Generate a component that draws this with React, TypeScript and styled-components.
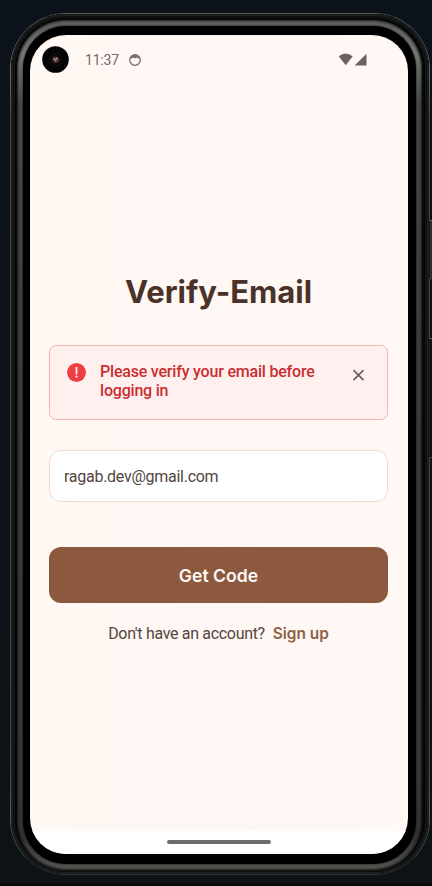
import React from "react";
import styled, { createGlobalStyle } from "styled-components";

const GlobalStyle = createGlobalStyle`
  * { box-sizing: border-box; }
  body { margin: 0; background: #0d131a; }
`;

const Stage = styled.main`
  width: 432px;
  height: 886px;
  overflow: hidden;
  padding: 13px 0 0 10px;
  background: linear-gradient(#0d131b, #0c1218 50%, #0d1215 99.5%, #07090b);
  position: relative;
  font-family: Roboto, sans-serif;
`;

const Bezel = styled.div`
  width: 420px;
  height: 862px;
  border-radius: 56px;
  padding: 1px;
  background: linear-gradient(#565b59, #6c6c6c 6%, #484a4a 12%, #404141 85%, #606060 95%, #333);
`;

const Shell = styled.div`
  height: 100%;
  border-radius: 55px;
  padding: 6px 7px 4px 6px;
  background: #080a0a;
  box-shadow: inset 0 0 0 1px #151919, inset 0 0 0 2px #1c201f, inset 0 0 0 3px #0b0d0d,
    inset 0 0 0 4px #161818, inset 0 0 0 5px #020202;
`;

const Rim = styled.div`
  height: 100%;
  border-radius: 49px;
  padding: 6px;
  background: linear-gradient(#595c59, #777976 4%, #464746 10%, #3b3b3a 50%, #383838 90%, #32312f 96%, #585652);
  box-shadow: inset 0 0 2px 1px rgba(0, 0, 0, 0.65);
`;

const Glass = styled.div`
  height: 100%;
  border-radius: 43px;
  padding: 9px 9px 10px 7px;
  background: #000;
  box-shadow: 0 0 2px 0 #000;
`;

const Screen = styled.div`
  width: 378px;
  height: 819px;
  border-radius: 36px;
  overflow: hidden;
  display: flex;
  flex-direction: column;
  background: linear-gradient(90deg, #fff8f3, #fff7f3 50%, #fff8f4);
`;

const SideButton = styled.i<{ $top: number; $height: number; $shade: string }>`
  position: absolute;
  right: 0;
  top: ${(p) => p.$top}px;
  width: 3px;
  height: ${(p) => p.$height}px;
  background: ${(p) => p.$shade};
  border-left: 1px solid #1c1c1c;
  border-top: 1px solid #666;
  border-bottom: 1px solid #444;
`;

const StatusBar = styled.header`
  height: 50px;
  padding: 0 41px 1px 12px;
  display: flex;
  align-items: center;
  color: #756b69;
`;

const Camera = styled.svg`
  width: 27px;
  height: 27px;
  margin-right: 16px;
`;

const Clock = styled.span`
  font-size: 14px;
  letter-spacing: -0.2px;
  width: 44px;
`;

const FaceIcon = styled.svg`
  width: 12px;
  height: 12px;
`;

const Signals = styled.svg`
  width: 29px;
  height: 14px;
  margin-left: auto;
`;

const Content = styled.section`
  flex: 1;
  padding: 188px 20px 0 19px;
  display: flex;
  flex-direction: column;
`;

const Title = styled.h1`
  margin: 0;
  height: 38px;
  text-align: center;
  font: 700 31px/38px Inter, sans-serif;
  color: #4a3228;
`;

const Alert = styled.div`
  height: 75px;
  margin-top: 34px;
  padding: 17px 22px 0 17px;
  display: flex;
  align-items: flex-start;
  border: 1px solid #f5b4b1;
  border-radius: 7px;
  background: #fff0f0;
`;

const AlertIcon = styled.svg`
  flex: none;
  width: 19px;
  height: 19px;
  margin: 0 14px 0 0;
`;

const AlertText = styled.p`
  margin: 0;
  flex: 1;
  font-size: 16px;
  letter-spacing: -0.2px;
  line-height: 18.5px;
  font-weight: 500;
  color: #ca2e30;
  white-space: nowrap;
`;

const CloseButton = styled.button`
  padding: 6px 0 0;
  border: 0;
  background: none;
  display: flex;
`;

const EmailField = styled.input`
  width: 100%;
  height: 52px;
  margin-top: 30px;
  padding: 1px 14px 0;
  border: 1px solid #f2d9cc;
  border-radius: 12px;
  outline: 0;
  background: #fff;
  font: 400 16px Roboto, sans-serif;
  letter-spacing: -0.27px;
  color: #54453f;
`;

const SubmitButton = styled.button`
  height: 56px;
  margin-top: 45px;
  padding: 0;
  border: 0;
  border-radius: 12px;
  background: #8c593f;
  color: #fffaf6;
  font: 600 17.6px Inter, sans-serif;
`;

const SignupRow = styled.p`
  margin: 21px 0 0;
  display: flex;
  justify-content: center;
  gap: 8px;
  font-size: 16px;
  letter-spacing: -0.32px;
  line-height: 20px;
  color: #54453f;
`;

const SignupLink = styled.a`
  font-family: Inter, sans-serif;
  font-size: 15.4px;
  letter-spacing: 0;
  font-weight: 600;
  color: #8f6048;
`;

const NavBar = styled.footer`
  height: 23px;
  display: flex;
  justify-content: center;
  padding-top: 9px;
  background: #fff;
`;

const HomeHandle = styled.div`
  width: 104px;
  height: 4px;
  border-radius: 2px;
  background: #6f6a6b;
`;

export default function App() {
  return (
    <>
      <GlobalStyle />
      <Stage>
        <Bezel>
          <Shell>
            <Rim>
              <Glass>
                <Screen>
                  <StatusBar>
                    <Camera viewBox="0 0 27 27">
                      <circle cx="13.5" cy="13.5" r="13.3" fill="#050404" />
                      <circle cx="13.5" cy="13.5" r="8" fill="#0e0908" />
                      <circle cx="13.7" cy="13.7" r="3.2" fill="#493a35" />
                      <path d="M11.6 12.3l2.3 2.4M14.2 12.2l1.2 1" stroke="#c9b1a9" strokeWidth="1.2" />
                    </Camera>
                    <Clock>11:37</Clock>
                    <FaceIcon viewBox="0 0 12 12">
                      <circle cx="6" cy="6" r="5.3" fill="none" stroke="currentColor" strokeWidth="1.2" />
                      <path d="M1.6 4.9L3 4.3L4 3.6Q6 4.8 8 3.6L9 4.3L10.4 4.9C10 1.8 8.2.8 6 .8S2 1.8 1.6 4.9Z" fill="currentColor" />
                    </FaceIcon>
                    <Signals viewBox="0 0 29 14" fill="#6b6261">
                      <path d="M.7 3.2Q7.7-2.2 14.7 3.2L7.7 12.2Z" />
                      <path d="M28.5.8V12.4H16.6Z" />
                    </Signals>
                  </StatusBar>
                  <Content>
                    <Title>Verify-Email</Title>
                    <Alert role="alert">
                      <AlertIcon viewBox="0 0 19 19">
                        <circle cx="9.5" cy="9.5" r="9.4" fill="#ee4044" />
                        <path d="M9.5 4.7v5.8" stroke="#fff0f1" strokeWidth="1.8" strokeLinecap="round" />
                        <circle cx="9.5" cy="13.6" r="1.1" fill="#fff0f1" />
                      </AlertIcon>
                      <AlertText>
                        Please verify your email before
                        <br />
                        logging in
                      </AlertText>
                      <CloseButton aria-label="Close">
                        <svg width="13" height="13" viewBox="0 0 13 13">
                          <path d="M1.5 1.2l10 10M11.5 1.2l-10 10" stroke="#6c6161" strokeWidth="1.7" />
                        </svg>
                      </CloseButton>
                    </Alert>
                    <EmailField defaultValue="ragab.dev@gmail.com" aria-label="Email" />
                    <SubmitButton>Get Code</SubmitButton>
                    <SignupRow>
                      Don't have an account?
                      <SignupLink>Sign up</SignupLink>
                    </SignupRow>
                  </Content>
                  <NavBar>
                    <HomeHandle />
                  </NavBar>
                </Screen>
              </Glass>
            </Rim>
          </Shell>
        </Bezel>
        <SideButton $top={220} $height={59} $shade="#2c2c2c" />
        <SideButton $top={338} $height={120} $shade="#111" />
      </Stage>
    </>
  );
}
